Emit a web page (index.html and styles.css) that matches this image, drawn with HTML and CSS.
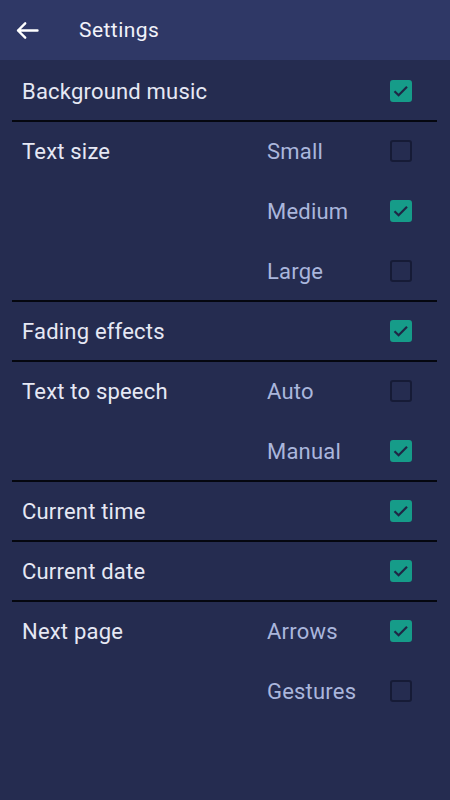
FILE: index.html
```html
<!DOCTYPE html>
<html>
<head>
<meta charset="utf-8">
<link rel="stylesheet" href="styles.css">
</head>
<body>
<div class="app">
  <header class="topbar">
    <span class="back">
      <svg width="26" height="24" viewBox="0 0 26 24"><path d="M4 12.5 H23.5 M11.2 5.3 L4 12.5 L11.2 19.7" fill="none" stroke="#ffffff" stroke-width="2.4" stroke-linecap="round" stroke-linejoin="round"/></svg>
    </span>
    <span class="title">Settings</span>
  </header>
  <main class="list">
    <section class="group">
      <div class="label">Background music</div>
      <div class="options">
        <div class="opt"><span class="opt-label"></span><span class="cb on"><svg viewBox="0 0 22 22"><path d="M4.5 11.2 L8.6 15.2 L17 6.8"/></svg></span></div>
      </div>
    </section>
    <div class="divider"></div>
    <section class="group">
      <div class="label">Text size</div>
      <div class="options">
        <div class="opt"><span class="opt-label">Small</span><span class="cb"></span></div>
        <div class="opt"><span class="opt-label">Medium</span><span class="cb on"><svg viewBox="0 0 22 22"><path d="M4.5 11.2 L8.6 15.2 L17 6.8"/></svg></span></div>
        <div class="opt"><span class="opt-label">Large</span><span class="cb"></span></div>
      </div>
    </section>
    <div class="divider"></div>
    <section class="group">
      <div class="label">Fading effects</div>
      <div class="options">
        <div class="opt"><span class="opt-label"></span><span class="cb on"><svg viewBox="0 0 22 22"><path d="M4.5 11.2 L8.6 15.2 L17 6.8"/></svg></span></div>
      </div>
    </section>
    <div class="divider"></div>
    <section class="group">
      <div class="label">Text to speech</div>
      <div class="options">
        <div class="opt"><span class="opt-label">Auto</span><span class="cb"></span></div>
        <div class="opt"><span class="opt-label">Manual</span><span class="cb on"><svg viewBox="0 0 22 22"><path d="M4.5 11.2 L8.6 15.2 L17 6.8"/></svg></span></div>
      </div>
    </section>
    <div class="divider"></div>
    <section class="group">
      <div class="label">Current time</div>
      <div class="options">
        <div class="opt"><span class="opt-label"></span><span class="cb on"><svg viewBox="0 0 22 22"><path d="M4.5 11.2 L8.6 15.2 L17 6.8"/></svg></span></div>
      </div>
    </section>
    <div class="divider"></div>
    <section class="group">
      <div class="label">Current date</div>
      <div class="options">
        <div class="opt"><span class="opt-label"></span><span class="cb on"><svg viewBox="0 0 22 22"><path d="M4.5 11.2 L8.6 15.2 L17 6.8"/></svg></span></div>
      </div>
    </section>
    <div class="divider"></div>
    <section class="group">
      <div class="label">Next page</div>
      <div class="options">
        <div class="opt"><span class="opt-label">Arrows</span><span class="cb on"><svg viewBox="0 0 22 22"><path d="M4.5 11.2 L8.6 15.2 L17 6.8"/></svg></span></div>
        <div class="opt"><span class="opt-label">Gestures</span><span class="cb"></span></div>
      </div>
    </section>
  </main>
</div>
</body>
</html>
```

FILE: styles.css
```css
* { box-sizing: border-box; }
html, body {
  margin: 0;
  padding: 0;
  background: #252c50;
}
body {
  font-family: Roboto, "Noto Sans", "Liberation Sans", sans-serif;
  width: 450px;
  height: 800px;
  overflow: hidden;
}
.app {
  width: 450px;
  min-height: 800px;
  background: #252c50;
}
.topbar {
  height: 60px;
  background: #2f3866;
  display: flex;
  align-items: center;
  padding-left: 14px;
}
.back {
  width: 26px;
  height: 24px;
  display: flex;
}
.title {
  margin-left: 39px;
  color: #f1f2fa;
  font-size: 21px;
  letter-spacing: 0.45px;
}
.list {
  padding-top: 1px;
}
.group {
  display: flex;
  padding-left: 22px;
  padding-right: 38px;
}
.label {
  flex: 1;
  height: 60px;
  display: flex;
  align-items: center;
  color: #e6e8f4;
  font-size: 22px;
  letter-spacing: 0.2px;
}
.options {
  display: flex;
  flex-direction: column;
}
.opt {
  height: 60px;
  display: flex;
  align-items: center;
}
.opt-label {
  width: 123px;
  color: #aab6dc;
  font-size: 22px;
  letter-spacing: 0.2px;
}
.cb {
  width: 22px;
  height: 22px;
  border-radius: 3px;
  border: 2px solid #161b36;
  display: flex;
}
.cb.on {
  background: #169c89;
  border-color: #169c89;
}
.cb svg {
  width: 22px;
  height: 22px;
  margin: -2px;
  fill: none;
  stroke: #1e2746;
  stroke-width: 2.2;
}
.divider {
  height: 2px;
  margin: -1px 13px -1px 12px;
  background: #05070f;
}
```
